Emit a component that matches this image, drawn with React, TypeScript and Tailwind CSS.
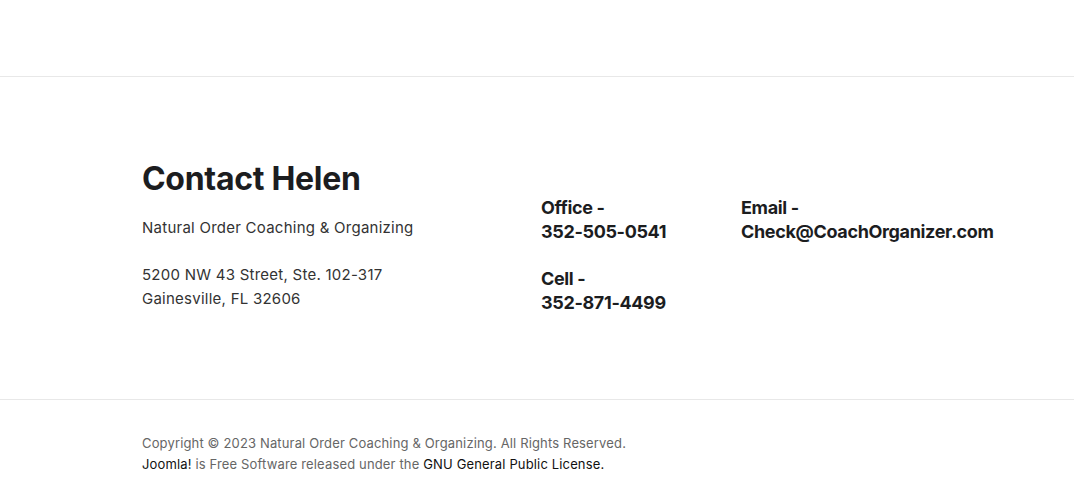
export default function App() {
  return (
    <div className="min-h-[487px] bg-white font-['Inter',sans-serif] text-[#1c1d1f]">
      <div className="h-[77px] border-b border-[#e8e8e8]" />
      <section className="border-b border-[#e8e8e8] pl-[142px] pt-[83px] pb-[84px]">
        <div className="grid grid-cols-[399px_200px_1fr]">
          <div>
            <h2 className="text-[32px] leading-[38px] font-bold tracking-[-0.3px]">Contact Helen</h2>
            <p className="mt-[18px] text-[15px] leading-[24px] tracking-[0.25px] text-[#333]">
              Natural Order Coaching &amp; Organizing
            </p>
            <p className="mt-[23px] text-[15px] leading-[24px] tracking-[0.25px] text-[#333]">
              5200 NW 43 Street, Ste. 102-317
              <br />
              Gainesville, FL 32606
            </p>
          </div>
          <div className="pt-[36px] text-[18px] leading-[24px] font-bold tracking-[-0.35px]">
            <p>
              Office -<br />
              352-505-0541
            </p>
            <p className="mt-[23px]">
              Cell -<br />
              352-871-4499
            </p>
          </div>
          <div className="pt-[36px] text-[18px] leading-[24px] font-bold tracking-[-0.35px]">
            <p>
              Email -<br />
              Check@CoachOrganizer.com
            </p>
          </div>
        </div>
      </section>
      <footer className="pl-[142px] pt-[33px] text-[13px] leading-[21px] tracking-[0.15px] text-[#666]">
        <p>Copyright © 2023 Natural Order Coaching &amp; Organizing. All Rights Reserved.</p>
        <p>
          <span className="text-[#111]">Joomla!</span> is Free Software released under the{" "}
          <span className="text-[#111]">GNU General Public License.</span>
        </p>
      </footer>
    </div>
  );
}
